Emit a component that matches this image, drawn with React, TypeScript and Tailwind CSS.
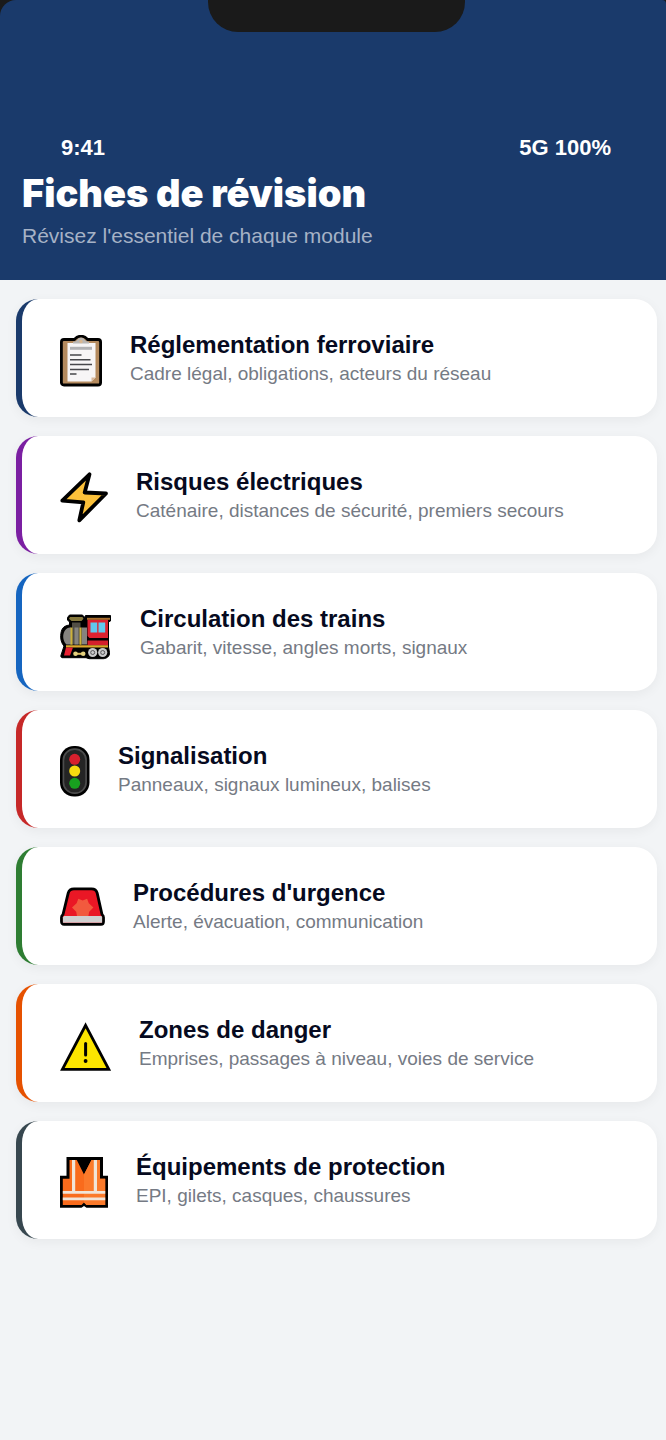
import type { ReactNode } from 'react';

function ClipboardIcon() {
  return (
    <svg className="h-13 w-[42px]" viewBox="0 0 42 52" aria-hidden="true">
      <path d="M4 4.500h10.500C15.500 4 16 1.200 21 1.200s5.500 2.800 6.500 3.300H38c1.600 0 2.600 1 2.600 2.600v40.300c0 1.600-1 2.600-2.600 2.600H4c-1.600 0-2.600-1-2.600-2.600V7.100c0-1.600 1-2.600 2.600-2.600z" fill="#b48a5e" stroke="#000" strokeWidth="2.800" strokeLinejoin="round" />
      <path d="M7.500 8h28v34.500l-4 4h-24z" fill="#f7f5f6" />
      <path d="M35.500 42.500l-4 4v-4z" fill="#d8b79a" />
      <path d="M13 8.500V6.800c2-.3 3.500-.6 4.500-2.300 1.200-2.200 5.800-2.200 7 0 1 1.700 2.500 2 4.500 2.300v1.700z" fill="#bab7b4" />
      <circle cx="21" cy="6.500" r="1.700" fill="#d9b791" />
      <path d="M10 13.300h22" stroke="#b2b2b4" strokeWidth="3" />
      <path d="M10 20h11.500M10 24.800h20.500M10 29.600h22M10 34.400h19M10 39h6.500" stroke="#47474b" strokeWidth="1.500" />
    </svg>
  );
}

function BoltIcon() {
  return (
    <svg className="h-13 w-12" viewBox="0 0 48 52" aria-hidden="true">
      <path d="M29.500 2.300L24.700 20.500l21.300 1L19.300 48.300l4-18-21-1.600z" fill="#fcc13a" stroke="#000" strokeWidth="3.800" strokeLinejoin="round" />
    </svg>
  );
}

function TrainIcon() {
  return (
    <svg className="h-13 w-[52px]" viewBox="0 0 52 52" aria-hidden="true">
      <path d="M7.500 8.500l2-2.500h13l2 2.500 1-2h25V12l-2 1V38l1 5.500c.3 4-3 6-6 6.200H29l-3-1H2c-1-.5-1.500-1.500-1-2.500L4 37C0 33 0 25 2 20.500c1.500-3 4-4 7.500-4.500v-3l-2-2z" fill="#000" stroke="#000" strokeLinejoin="round" />
      <path d="M10 8h12.500l1 1.800-2 2.200h-10L9 9.800z" fill="#85783c" />
      <path d="M12 13.500h8.500v22H12z" fill="#514e45" />
      <path d="M10 18.500c-8 1-8.500 12.500-3.500 17H11V18.500zM21.500 18.500H27v17h-5.500zM14.500 18.500h4v17h-4z" fill="#85837f" />
      <path d="M10.500 18.500h2v17.200h-2zM19.500 18.500h2v17.200h-2z" fill="#cdb23a" />
      <path d="M27.500 10.500H48V29H29.500l-2-2z" fill="#dd2230" />
      <path d="M27.500 31.500H48v4.800H27.500z" fill="#d51f2c" />
      <path d="M27 8.800h23v2H27z" fill="#a9702f" />
      <path d="M30.500 13.500h6.700v10h-6.700zM38.500 13.500h6.700v10h-6.700z" fill="#61c9ee" />
      <path d="M6 36.300h42v2.200H6z" fill="#dba82c" />
      <path d="M6 38.500h7L10 46.500H4z" fill="#e82132" />
      <circle cx="32.700" cy="43.500" r="4.600" fill="#c9c9ca" />
      <circle cx="42.700" cy="43.500" r="4.600" fill="#c9c9ca" />
      <circle cx="32.700" cy="43.500" r="2" fill="none" stroke="#57575a" />
      <circle cx="42.700" cy="43.500" r="2" fill="none" stroke="#57575a" />
      <path d="M15 44.800h9" stroke="#d8bb62" strokeWidth="2" />
      <circle cx="15.500" cy="44.800" r="2.300" fill="#e4d17e" />
      <circle cx="23.200" cy="44.800" r="2.300" fill="#e4d17e" />
    </svg>
  );
}

function TrafficLightIcon() {
  return (
    <svg className="h-13 w-[30px]" viewBox="0 0 30 52" aria-hidden="true">
      <rect x="0" y="0" width="29.500" height="50.500" rx="14" fill="#000" />
      <rect x="3.400" y="3.200" width="22.700" height="44" rx="11" fill="#242424" stroke="#4c4c4c" strokeWidth="1.700" />
      <circle cx="14.700" cy="13.300" r="5.500" fill="#d8202d" />
      <circle cx="14.700" cy="25" r="5.500" fill="#f7dc10" />
      <circle cx="14.700" cy="37.300" r="5.500" fill="#18a11f" />
    </svg>
  );
}

function SirenIcon() {
  return (
    <svg className="h-13 w-[45px]" viewBox="0 0 45 52" aria-hidden="true">
      <path d="M14 5.800h17.500c3.200 0 5 1.600 5.700 4.300L42 31.500c1 .8 1.500 1.500 1.500 3v4c0 1.800-1 2.800-2.500 2.800H4c-1.500 0-2.500-1-2.500-2.800v-4c0-1.500.5-2.200 1.500-3L8.200 10.100c.7-2.700 2.500-4.300 5.800-4.300z" fill="#ea1725" stroke="#000" strokeWidth="2.800" strokeLinejoin="round" />
      <path d="M18.300 15.800l4.400 1.800 4.400-1.800 1.700 4.400 4.600 4.400-4.200 4.200-.8 4.200H17l-.8-4.200-4.200-4.200 4.600-4.400z" fill="#f25a3e" />
      <path d="M4 33h37.500l.6 1.500v5.200H2.900v-5.200z" fill="#d1d0d0" />
    </svg>
  );
}

function WarningIcon() {
  return (
    <svg className="h-13 w-[51px]" viewBox="0 0 51 52" aria-hidden="true">
      <path d="M25.600 5.300L48.800 49.300H2.400z" fill="#fce500" stroke="#000" strokeWidth="2.800" />
      <path d="M25.600 23.500v11.500" stroke="#000" strokeWidth="3" strokeLinecap="round" />
      <circle cx="25.600" cy="41" r="1.900" fill="#000" />
    </svg>
  );
}

function VestIcon() {
  return (
    <svg className="h-13 w-12" viewBox="0 0 48 52" aria-hidden="true">
      <path d="M6.500-.3h36.500v19H48V50.800H26.500L24 49l-2.500 1.800H0V18.700h6.500z" fill="#000" />
      <path d="M9.500 3h7.300L24 17.500 31.500 3H40v18.700H45.200V48H26.500L24 45.500 21.500 48H2.800V21.700h6.700z" fill="#f96b1c" />
      <path d="M24 17.500L31.500 3H40v18.700h5.200V48H26.500L24 45.500z" fill="#fb7a2b" />
      <path d="M12 3h3.200v31H12zM33.800 3H37v31h-3.200zM2.800 34h42.400v2.800H2.800zM2.800 40.500h42.400v2.800H2.800z" fill="#f1e4d8" />
    </svg>
  );
}

type Sheet = {
  id: string;
  title: string;
  summary: string;
  accent: string;
  icon: ReactNode;
};

const sheets: Sheet[] = [
  { id: 'reglementation', title: 'Réglementation ferroviaire', summary: 'Cadre légal, obligations, acteurs du réseau', accent: 'border-l-[#1a3a6b]', icon: <ClipboardIcon /> },
  { id: 'electricite', title: 'Risques électriques', summary: 'Caténaire, distances de sécurité, premiers secours', accent: 'border-l-[#7b1fa2]', icon: <BoltIcon /> },
  { id: 'circulation', title: 'Circulation des trains', summary: 'Gabarit, vitesse, angles morts, signaux', accent: 'border-l-[#1565c0]', icon: <TrainIcon /> },
  { id: 'signalisation', title: 'Signalisation', summary: 'Panneaux, signaux lumineux, balises', accent: 'border-l-[#c62828]', icon: <TrafficLightIcon /> },
  { id: 'urgence', title: "Procédures d'urgence", summary: 'Alerte, évacuation, communication', accent: 'border-l-[#2e7d32]', icon: <SirenIcon /> },
  { id: 'danger', title: 'Zones de danger', summary: 'Emprises, passages à niveau, voies de service', accent: 'border-l-[#e65100]', icon: <WarningIcon /> },
  { id: 'protection', title: 'Équipements de protection', summary: 'EPI, gilets, casques, chaussures', accent: 'border-l-[#37474f]', icon: <VestIcon /> },
];

function SheetCard({ sheet }: { sheet: Sheet }) {
  return (
    <a
      href={`#${sheet.id}`}
      className={`flex items-center gap-7 rounded-[22px] border-l-[6px] bg-white py-[30px] pr-6 pl-[38px] shadow-[0_3px_12px_rgba(0,0,0,0.05)] ${sheet.accent}`}
    >
      <span className="shrink-0 pt-1.5">{sheet.icon}</span>
      <span className="flex min-w-0 flex-col">
        <span className="text-[24px] leading-[32px] font-bold text-[#060a20]">{sheet.title}</span>
        <span className="text-[19px] leading-[26px] text-[#757a84]">{sheet.summary}</span>
      </span>
    </a>
  );
}

export default function App() {
  return (
    <div className="min-h-screen bg-[#f2f4f6] font-['Liberation_Sans',Arial,sans-serif]">
      <div className="bg-[#1a1a1a]">
        <header className="rounded-tl-[16px] rounded-tr-[4px] bg-[#1a3a6b] pb-[30px]">
          <div className="flex justify-center pl-[7px]">
            <div className="h-8 w-[257px] rounded-b-[30px] bg-[#1a1a1a]" />
          </div>
          <div className="flex justify-between pt-[102px] pr-[55px] pl-[61px] text-[22px] leading-[28px] font-bold text-white">
            <span>9:41</span>
            <span>5G 100%</span>
          </div>
          <div className="px-[22px] pt-2">
            <h1 className="font-['Inter',sans-serif] text-[38px] leading-[46px] font-black text-white">Fiches de révision</h1>
            <p className="pt-1.5 text-[21px] leading-[28px] text-[#a6b2c6]">Révisez l'essentiel de chaque module</p>
          </div>
        </header>
      </div>
      <main className="pt-[19px] pr-[9px] pb-10 pl-4">
        <ul className="flex flex-col gap-[19px]">
          {sheets.map((sheet) => (
            <li key={sheet.id}>
              <SheetCard sheet={sheet} />
            </li>
          ))}
        </ul>
      </main>
    </div>
  );
}
